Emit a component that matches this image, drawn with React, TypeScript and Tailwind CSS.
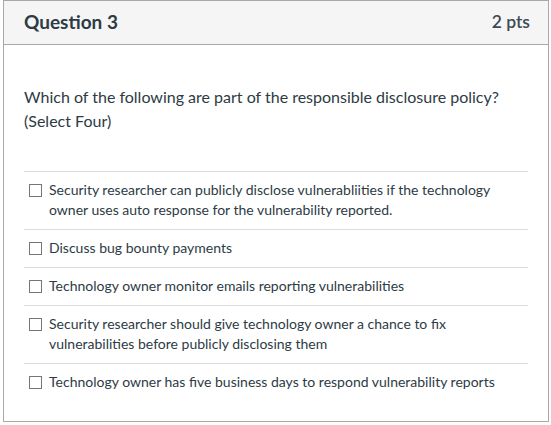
import React from "react";

const options = [
  "Security researcher can publicly disclose vulnerabliities if the technology owner uses auto response for the vulnerability reported.",
  "Discuss bug bounty payments",
  "Technology owner monitor emails reporting vulnerabilities",
  "Security researcher should give technology owner a chance to fix vulnerabilities before publicly disclosing them",
  "Technology owner has five business days to respond vulnerability reports",
];

const App: React.FC = () => {
  return (
    <div className="bg-white pl-[3px] pr-[2px] font-['Lato',sans-serif] text-[#2d3b45]">
      <div className="h-[422px] border border-[#a8a8a8] bg-white">
        <div className="flex h-[44px] items-center justify-between border-b border-[#a8a8a8] bg-[#f5f5f5] pl-[20px] pr-[18px]">
          <h2 className="text-[19px] font-bold">Question 3</h2>
          <span className="text-[17.5px] font-semibold text-[#3d4a54]">2 pts</span>
        </div>
        <div className="px-[20px] pt-[40px]">
          <p className="pb-[38px] text-[16px] leading-[24px]">
            Which of the following are part of the responsible disclosure policy? (Select Four)
          </p>
          <div>
            {options.map((opt) => (
              <label
                key={opt}
                className="flex gap-[7px] border-t border-[#dcdcdc] pb-[9px] pl-[5px] pr-[10px] pt-[8px] text-[14px] leading-[20px]"
              >
                <span className="mt-[4px] h-[13px] w-[13px] shrink-0 border border-[#767676] bg-white" />
                <span>{opt}</span>
              </label>
            ))}
          </div>
        </div>
      </div>
    </div>
  );
};

export default App;
